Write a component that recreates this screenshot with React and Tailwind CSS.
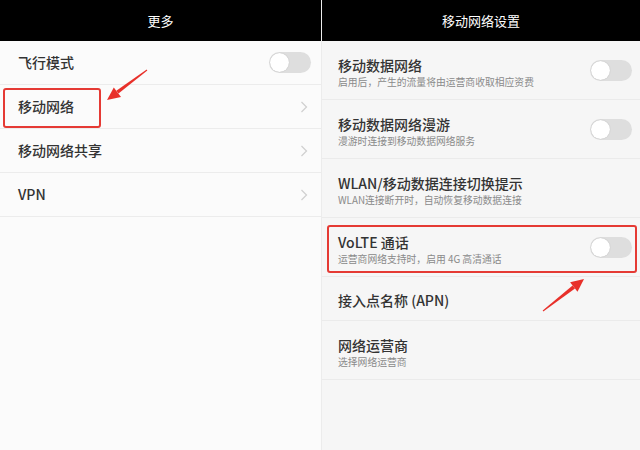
import React from "react";

const font = { fontFamily: '"Noto Sans CJK SC", "Noto Sans", sans-serif' };

function Toggle() {
  return (
    <div className="w-[42px] h-[21px] rounded-full bg-[#dedede] flex items-center pl-[1px]">
      <div className="w-[19px] h-[19px] rounded-full bg-white shadow-[0_0_1px_rgba(0,0,0,0.25)]"></div>
    </div>
  );
}

function Chevron() {
  return (
    <svg width="8" height="12" viewBox="0 0 8 12" className="mr-[3px]">
      <path d="M1.5 1 L6.5 6 L1.5 11" fill="none" stroke="#cfcfcf" strokeWidth="1.2" />
    </svg>
  );
}

function LeftRow({ label, right }) {
  return (
    <div className="flex items-center justify-between pl-[18px] pr-[10px] border-b border-[#ececec] h-[44px]">
      <span className="text-[14px] text-[#333] font-medium">{label}</span>
      {right}
    </div>
  );
}

function RightRow({ title, sub, toggle, height = "h-[59px]" }) {
  return (
    <div className={`flex items-center justify-between pl-[16px] pr-[8px] border-b border-[#ebebeb] ${height}`}>
      <div className="flex flex-col pt-[3px]">
        <span className="text-[14px] leading-[18px] text-[#333] font-medium">{title}</span>
        {sub && <span className="text-[9.8px] leading-[12px] mt-[2px] text-[#8a8a8a]">{sub}</span>}
      </div>
      {toggle && <Toggle />}
    </div>
  );
}

export default function App() {
  return (
    <div className="relative w-[640px] h-[450px] flex overflow-hidden" style={font}>
      {/* Left panel */}
      <div className="w-[322px] flex flex-col bg-[#fbfbfb] border-r border-[#ececec]">
        <div className="h-[41px] bg-black flex items-center justify-center">
          <span className="text-white text-[13px]">更多</span>
        </div>
        <LeftRow label="飞行模式" right={<Toggle />} />
        <LeftRow label="移动网络" right={<Chevron />} />
        <LeftRow label="移动网络共享" right={<Chevron />} />
        <LeftRow label="VPN" right={<Chevron />} />
      </div>

      {/* Right panel */}
      <div className="flex-1 flex flex-col bg-[#f6f6f6]">
        <div className="h-[41px] bg-black flex items-center justify-center">
          <span className="text-white text-[13px]">移动网络设置</span>
        </div>
        <RightRow title="移动数据网络" sub="启用后，产生的流量将由运营商收取相应资费" toggle />
        <RightRow title="移动数据网络漫游" sub="漫游时连接到移动数据网络服务" toggle />
        <RightRow title="WLAN/移动数据连接切换提示" sub="WLAN连接断开时，自动恢复移动数据连接" />
        <RightRow title="VoLTE 通话" sub="运营商网络支持时，启用 4G 高清通话" toggle />
        <RightRow title="接入点名称 (APN)" height="h-[44px]" />
        <RightRow title="网络运营商" sub="选择网络运营商" />
      </div>

      {/* Red highlight boxes */}
      <div className="absolute left-[3px] top-[88px] w-[98px] h-[40px] border-2 border-[#e53a34] rounded-[3px] pointer-events-none"></div>
      <div className="absolute left-[327px] top-[225px] w-[310px] h-[48px] border-2 border-[#e53a34] rounded-[3px] pointer-events-none"></div>

      {/* Arrows */}
      <svg className="absolute left-0 top-0 pointer-events-none" width="640" height="450">
        <polygon points="147.3,70.4 146.7,69.6 116.3,90.8 118.5,93.6" fill="#e8302a" />
        <polygon points="107,100 121,97 113.8,87.4" fill="#e8302a" />
        <polygon points="542.7,310.6 543.3,311.4 575,288.4 572.6,285.6" fill="#e8302a" />
        <polygon points="584,279 577.5,291.7 570.1,282.3" fill="#e8302a" />
      </svg>
    </div>
  );
}
